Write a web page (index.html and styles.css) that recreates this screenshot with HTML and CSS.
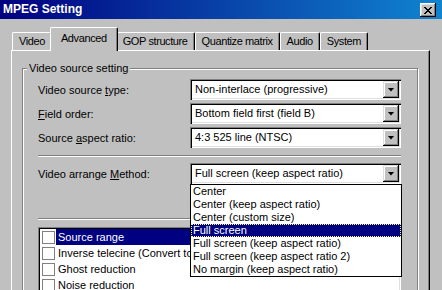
FILE: index.html
```html
<!DOCTYPE html>
<html lang="en">
<head>
    <meta charset="UTF-8">
    <title>MPEG Setting</title>
    <link rel="stylesheet" href="styles.css">
</head>
<body>
    <div class="titlebar">
        <span class="title">MPEG Setting</span>
        <button class="close-btn">
            <svg width="8" height="7" viewBox="0 0 8 7"><path d="M0 0h2v1h-2z M6 0h2v1h-2z M1 1h2v1h-2z M5 1h2v1h-2z M2 2h4v1h-4z M3 3h2v1h-2z M2 4h4v1h-4z M1 5h2v1h-2z M5 5h2v1h-2z M0 6h2v1h-2z M6 6h2v1h-2z" fill="#000"/></svg>
        </button>
    </div>

    <div class="tabs">
        <div class="tab">Video</div>
        <div class="tab active">Advanced</div>
        <div class="tab">GOP structure</div>
        <div class="tab">Quantize matrix</div>
        <div class="tab">Audio</div>
        <div class="tab">System</div>
    </div>

    <div class="panel">
        <fieldset class="group">
            <legend>Video source setting</legend>
            <div class="group-body">
                <div class="row">
                    <span class="label">Video source <u>t</u>ype:</span>
                    <div class="combo"><span class="value">Non-interlace (progressive)</span><span class="drop"></span></div>
                </div>
                <div class="row">
                    <span class="label"><u>F</u>ield order:</span>
                    <div class="combo"><span class="value">Bottom field first (field B)</span><span class="drop"></span></div>
                </div>
                <div class="row">
                    <span class="label">Source <u>a</u>spect ratio:</span>
                    <div class="combo"><span class="value">4:3 525 line (NTSC)</span><span class="drop"></span></div>
                </div>

                <div class="sep"></div>

                <div class="row">
                    <span class="label">Video arrange <u>M</u>ethod:</span>
                    <div class="combo open">
                        <span class="value">Full screen (keep aspect ratio)</span><span class="drop"></span>
                        <!-- open dropdown list -->
                        <div class="droplist">
                            <div class="opt">Center</div>
                            <div class="opt">Center (keep aspect ratio)</div>
                            <div class="opt">Center (custom size)</div>
                            <div class="opt selected">Full screen</div>
                            <div class="opt">Full screen (keep aspect ratio)</div>
                            <div class="opt">Full screen (keep aspect ratio 2)</div>
                            <div class="opt">No margin (keep aspect ratio)</div>
                        </div>
                    </div>
                </div>

                <div class="sep sep-low"></div>

                <div class="checklist">
                    <div class="check-row"><span class="box"></span><span class="item selected">Source range</span></div>
                    <div class="check-row"><span class="box"></span><span class="item">Inverse telecine (Convert to</span></div>
                    <div class="check-row"><span class="box"></span><span class="item">Ghost reduction</span></div>
                    <div class="check-row"><span class="box"></span><span class="item">Noise reduction</span></div>
                </div>
            </div>
        </fieldset>
    </div>
</body>
</html>
```

FILE: styles.css
```css
body {
    margin: 0;
    width: 442px;
    height: 290px;
    overflow: hidden;
    background: #c0c0c0;
    color: #000;
    font-family: "Liberation Sans", Arial, sans-serif;
    font-size: 11px;
}
/* Title bar */
.titlebar {
    height: 19px;
    display: flex;
    justify-content: space-between;
    align-items: flex-start;
    padding: 0 6px 0 3px;
    background: linear-gradient(to right, #000080, #1084d0);
}
.title {
    color: #fff;
    font-weight: bold;
    font-size: 12px;
    line-height: 19px;
}
.close-btn {
    width: 16px;
    height: 14px;
    margin-top: 3px;
    padding: 0;
    border: none;
    background: #c0c0c0;
    display: flex;
    align-items: center;
    justify-content: center;
    box-shadow: inset -1px -1px #000, inset 1px 1px #fff, inset -2px -2px #808080, inset 2px 2px #dfdfdf;
}
.close-btn svg {
    display: block;
}
/* Tabs */
.tabs {
    display: flex;
    align-items: flex-end;
    height: 23px;
    margin-top: 8px;
    padding-left: 12px;
}
.tab {
    height: 18px;
    box-sizing: border-box;
    padding: 0 6px;
    line-height: 17px;
    letter-spacing: -0.4px;
    border-top: 1px solid #fff;
    border-left: 1px solid #fff;
    border-right: 1px solid #000;
    border-radius: 2px 2px 0 0;
    box-shadow: inset -1px 0 #808080;
}
.tab.active {
    position: relative;
    z-index: 2;
    height: 24px;
    margin: 0 -2px -1px;
    padding: 0 10px 3px;
    line-height: 20px;
    background: #c0c0c0;
}
/* Tab page */
.panel {
    position: relative;
    width: 419px;
    height: 260px;
    margin-left: 11px;
    box-sizing: border-box;
    padding: 11px 10px 0 10px;
    border-top: 1px solid #fff;
    border-left: 1px solid #fff;
    border-right: 1px solid #000;
    box-shadow: inset -1px 0 #808080;
}
.group {
    margin: 0 1px 0 0;
    padding: 0;
    height: 300px;
    border: 1px solid #808080;
    box-shadow: inset 1px 1px #fff, 1px 1px #fff;
}
.group legend {
    margin-left: 4px;
    padding: 0 2px;
    line-height: 13px;
    background: #c0c0c0;
    position: relative;
}
.group-body {
    padding: 4px 16px 0 15px;
}
.row {
    display: flex;
    align-items: center;
    margin-bottom: 3px;
}
.label {
    width: 152px;
}
/* Combo box */
.combo {
    position: relative;
    display: flex;
    width: 211px;
    height: 21px;
    box-sizing: border-box;
    padding: 2px;
    background: #fff;
    box-shadow: inset 1px 1px #808080, inset 2px 2px #000, inset -1px -1px #fff, inset -2px -2px #dfdfdf;
}
.value {
    flex: 1;
    padding-left: 3px;
    line-height: 17px;
    white-space: nowrap;
}
.drop {
    width: 16px;
    height: 17px;
    display: flex;
    align-items: center;
    justify-content: center;
    background: #c0c0c0;
    box-shadow: inset -1px -1px #000, inset 1px 1px #dfdfdf, inset -2px -2px #808080, inset 2px 2px #fff;
}
.drop::after {
    content: "";
    width: 7px;
    height: 4px;
    background: #000;
    clip-path: polygon(0 0, 100% 0, 50% 100%);
}
.droplist {
    position: absolute;
    top: 100%;
    left: 0;
    z-index: 5;
    width: 212px;
    box-sizing: border-box;
    border: 1px solid #000;
    background: #fff;
}
.opt {
    height: 13px;
    line-height: 13px;
    padding-left: 2px;
    white-space: nowrap;
}
.opt.selected {
    background: #000080;
    color: #fff;
    outline: 1px dotted #ffff80;
    outline-offset: -1px;
}
/* Separators */
.sep {
    height: 0;
    margin: 7px 0 6px;
    border-top: 1px solid #808080;
    border-bottom: 1px solid #fff;
}
.sep.sep-low {
    margin: 34px 0 7px;
}
/* Check list */
.checklist {
    height: 80px;
    padding: 2px;
    background: #fff;
    box-shadow: inset 1px 1px #808080, inset 2px 2px #000, inset -1px -1px #fff, inset -2px -2px #dfdfdf;
}
.check-row {
    display: flex;
    align-items: center;
    height: 16px;
}
.box {
    width: 11px;
    height: 11px;
    margin: 0 1px 0 2px;
    border: 1px solid #808080;
    background: #fff;
}
.item {
    flex: 1;
    padding-left: 2px;
    line-height: 16px;
    white-space: nowrap;
}
.item.selected {
    background: #000080;
    color: #fff;
}
```
